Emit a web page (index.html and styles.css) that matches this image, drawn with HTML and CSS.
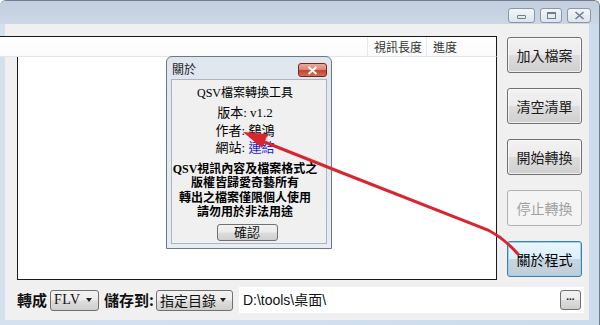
FILE: index.html
```html
<!DOCTYPE html>
<html lang="zh-Hant">
<head>
<meta charset="utf-8">
<title>QSV檔案轉換工具</title>
<link rel="stylesheet" href="styles.css">
</head>
<body>
<div class="window">
  <div class="titlebar">
    <div class="caption-btns">
      <span class="cbtn cbtn-min"><span class="glyph-min"></span></span>
      <span class="cbtn cbtn-max"><span class="glyph-max"></span></span>
      <span class="cbtn cbtn-close">
        <svg width="11" height="9" viewBox="0 0 11 9"><path d="M1.5 1 L9.5 8 M9.5 1 L1.5 8" stroke="#6f7c8c" stroke-width="1.6" fill="none"/></svg>
      </span>
    </div>
  </div>
  <div class="client">
    <div class="main">
      <div class="list">
        <div class="list-header">
          <span class="col col-blank"></span>
          <span class="col col-len">視訊長度</span>
          <span class="col col-prog">進度</span>
        </div>
        <div class="list-body"></div>
      </div>
      <div class="actions">
        <button class="btn">加入檔案</button>
        <button class="btn">清空清單</button>
        <button class="btn">開始轉換</button>
        <button class="btn btn-disabled">停止轉換</button>
        <button class="btn btn-focus">關於程式</button>
      </div>
    </div>
    <div class="bottom">
      <span class="lbl">轉成</span>
      <div class="combo combo-fmt"><span class="combo-text serif">FLV</span><span class="combo-arrow"></span></div>
      <span class="lbl lbl-save">儲存到:</span>
      <div class="combo combo-dir"><span class="combo-text">指定目錄</span><span class="combo-arrow"></span></div>
      <div class="path">
        <span class="path-text">D:\tools\桌面\</span>
        <button class="browse">...</button>
      </div>
    </div>
  </div>

  <div class="dialog">
    <div class="dlg-title">
      <span class="dlg-caption">關於</span>
      <span class="dlg-close">
        <svg width="11" height="9" viewBox="0 0 11 9"><path d="M1.5 1 L9.5 8 M9.5 1 L1.5 8" stroke="#ffffff" stroke-width="2" fill="none"/></svg>
      </span>
    </div>
    <div class="dlg-client">
      <div class="dlg-app">QSV檔案轉換工具</div>
      <div class="dlg-info">
        <div>版本: v1.2</div>
        <div>作者: 鷂鴻</div>
        <div>網站: <span class="link">連結</span></div>
      </div>
      <div class="dlg-notice">
        <div>QSV視訊內容及檔案格式之</div>
        <div>版權皆歸愛奇藝所有</div>
        <div>轉出之檔案僅限個人使用</div>
        <div>請勿用於非法用途</div>
      </div>
      <button class="dlg-ok">確認</button>
    </div>
  </div>

  <svg class="annotation" width="600" height="325" viewBox="0 0 600 325">
    <path d="M262 140 L340 171 L488 229 Q505 238 518 253" stroke="#d9252e" stroke-width="3" fill="none" stroke-linecap="round"/>
    <polygon points="243,131 268,133 262,147" fill="#d9252e"/>
  </svg>
</div>
</body>
</html>
```
FILE: styles.css
```css
* { box-sizing: border-box; }
html, body { margin: 0; padding: 0; }
body {
  width: 600px;
  height: 325px;
  overflow: hidden;
  background: #ffffff;
  font-family: "Noto Sans CJK TC", "Noto Sans", sans-serif;
}

.window {
  position: relative;
  width: 600px;
  height: 325px;
  background: linear-gradient(90deg, #d4e1ef, #cddcec);
  border-radius: 6px 6px 0 0;
  border-top: 1px solid #6f7d8e;
  border-right: 1px solid #6f7d8e;
  overflow: hidden;
}

.titlebar {
  height: 23px;
  background: linear-gradient(#c3cfdf, #ccd7e5);
  display: flex;
  justify-content: flex-end;
  align-items: flex-start;
  padding: 7px 8px 0 0;
}
.caption-btns { display: flex; gap: 5px; }
.cbtn {
  height: 15px;
  border: 1px solid #8a96a6;
  border-radius: 3px;
  background: linear-gradient(#f3f6f9, #dde4ec);
  display: flex;
  align-items: center;
  justify-content: center;
}
.cbtn-min { width: 27px; }
.cbtn-max { width: 22px; }
.cbtn-close { width: 24px; }
.glyph-min {
  width: 9px; height: 4px;
  border: 1px solid #6f7c8c;
  border-radius: 1px;
  margin-top: 3px;
}
.glyph-max {
  width: 9px; height: 7px;
  border: 1px solid #6f7c8c;
  border-top-width: 2px;
}

.client {
  height: 296px;
  width: 589px;
  background: #f0f0f0;
  border-left: 5px solid #d3e0ee;
  padding-top: 12px;
  display: flex;
  flex-direction: column;
}

.main { display: flex; height: 244px; }

.list { width: 492px; display: flex; flex-direction: column; }
.list-header {
  margin-left: -5px;
  width: 497px;
  height: 21px;
  border-top: 1px solid #1a1a1a;
  border-right: 1px solid #1a1a1a;
  border-bottom: 1px solid #e3e5e8;
  background: linear-gradient(#ffffff, #fbfbfc);
  display: flex;
  font-size: 12px;
  line-height: 19px;
  color: #333333;
}
.col { display: block; }
.col-blank { width: 367px; }
.col-len { width: 59px; padding-left: 6px; border-left: 1px solid #e6e8eb; }
.col-prog { flex: 1; padding-left: 6px; border-left: 1px solid #e6e8eb; }
.list-body {
  flex: 1;
  margin-left: 12px;
  background: #ffffff;
  border-left: 1px solid #1a1a1a;
  border-right: 1px solid #1a1a1a;
  border-bottom: 1px solid #1a1a1a;
}

.actions {
  margin-left: 10px;
  width: 75px;
  padding-top: 1px;
  display: flex;
  flex-direction: column;
  gap: 15px;
}
.btn {
  height: 36px;
  width: 75px;
  padding: 0;
  border: 1px solid #707070;
  border-radius: 3px;
  background: linear-gradient(#f2f2f2 0%, #ebebeb 49%, #dddddd 51%, #cfcfcf 100%);
  font-family: "Noto Sans CJK TC", sans-serif;
  font-size: 14px;
  color: #1a1a1a;
  box-shadow: inset 0 0 0 1px rgba(255,255,255,0.7);
}
.btn-disabled {
  border-color: #adb2b5;
  background: #f4f4f4;
  color: #a0a0a0;
  box-shadow: none;
}
.btn-focus {
  border-color: #3c7fb1;
  background: linear-gradient(#eaf6fd 0%, #d9f0fc 49%, #c6d6e0 51%, #c2cdd6 100%);
  box-shadow: inset 0 0 0 1px #9fd0ea;
  color: #000000;
}

.bottom {
  height: 40px;
  display: flex;
  align-items: center;
  padding-left: 12px;
}
.lbl {
  font-size: 15px;
  font-weight: bold;
  color: #111111;
  line-height: 20px;
}
.lbl-save { margin-left: 5px; }
.combo {
  height: 21px;
  border: 1px solid #707070;
  border-radius: 3px;
  background: linear-gradient(#f2f2f2 0%, #ebebeb 49%, #dddddd 51%, #cfcfcf 100%);
  display: flex;
  align-items: center;
  justify-content: space-between;
  padding: 0 6px 0 3px;
}
.combo-fmt { width: 49px; margin-left: 3px; }
.combo-dir { width: 77px; margin-left: 2px; }
.combo-text { font-size: 14px; line-height: 18px; color: #111111; }
.serif { font-family: "Liberation Serif", serif; font-size: 14px; letter-spacing: 0.5px; }
.combo-arrow {
  width: 0; height: 0;
  border-left: 3.5px solid transparent;
  border-right: 3.5px solid transparent;
  border-top: 4px solid #222222;
}
.path {
  margin-left: 6px;
  width: 345px;
  height: 26px;
  background: #ffffff;
  display: flex;
  align-items: center;
  justify-content: space-between;
  padding: 0 3px 0 4px;
}
.path-text {
  font-family: "Liberation Sans", "Noto Sans CJK TC", sans-serif;
  font-size: 14px;
  color: #111111;
  line-height: 18px;
}
.browse {
  width: 21px;
  height: 20px;
  padding: 0 0 6px;
  border: 1px solid #707070;
  border-radius: 3px;
  background: linear-gradient(#f2f2f2 0%, #ebebeb 49%, #dddddd 51%, #cfcfcf 100%);
  font-family: "Liberation Sans", sans-serif;
  font-size: 10px;
  font-weight: bold;
  line-height: 10px;
  color: #111111;
}

/* About dialog (floating over the main window) */
.dialog {
  position: absolute;
  left: 166px;
  top: 55px;
  width: 166px;
  height: 193px;
  border: 1px solid #6a7889;
  border-radius: 6px 6px 0 0;
  background: linear-gradient(#dfe6ee, #e8edf3);
  padding: 0 4px 4px;
  display: flex;
  flex-direction: column;
}
.dlg-title {
  height: 22px;
  display: flex;
  justify-content: space-between;
  align-items: flex-start;
  padding: 5px 0 0 1px;
}
.dlg-caption { font-size: 12px; line-height: 13px; color: #222222; }
.dlg-close {
  width: 29px;
  height: 14px;
  margin-top: 1px;
  border: 1px solid #6d2b20;
  border-radius: 3px;
  background: linear-gradient(#e9a99b 0%, #dd8a77 45%, #c7402e 55%, #d0705a 100%);
  display: flex;
  align-items: center;
  justify-content: center;
}
.dlg-client {
  flex: 1;
  background: #f0f0f0;
  border: 1px solid #a9b5c3;
  display: flex;
  flex-direction: column;
  align-items: center;
  padding: 4px 8px 0 0;
  font-family: "Liberation Serif", "Noto Sans CJK TC", serif;
  color: #000000;
}
.dlg-app { font-size: 12px; line-height: 18px; }
.dlg-info { margin-top: 2px; font-size: 13px; line-height: 17.5px; text-align: center; }
.link { color: #2222cc; }
.dlg-notice {
  margin-top: 5px;
  font-size: 12px;
  font-weight: bold;
  line-height: 14.5px;
  text-align: center;
  white-space: nowrap;
}
.dlg-ok {
  margin-top: 4px;
  margin-left: 4px;
  width: 61px;
  height: 17px;
  padding: 0;
  border: 1px solid #707070;
  border-radius: 3px;
  background: linear-gradient(#f2f2f2 0%, #ebebeb 49%, #dddddd 51%, #cfcfcf 100%);
  font-family: "Noto Sans CJK TC", sans-serif;
  font-size: 13px;
  line-height: 14px;
  color: #111111;
}

.annotation {
  position: absolute;
  left: 0;
  top: 0;
  pointer-events: none;
}
```
